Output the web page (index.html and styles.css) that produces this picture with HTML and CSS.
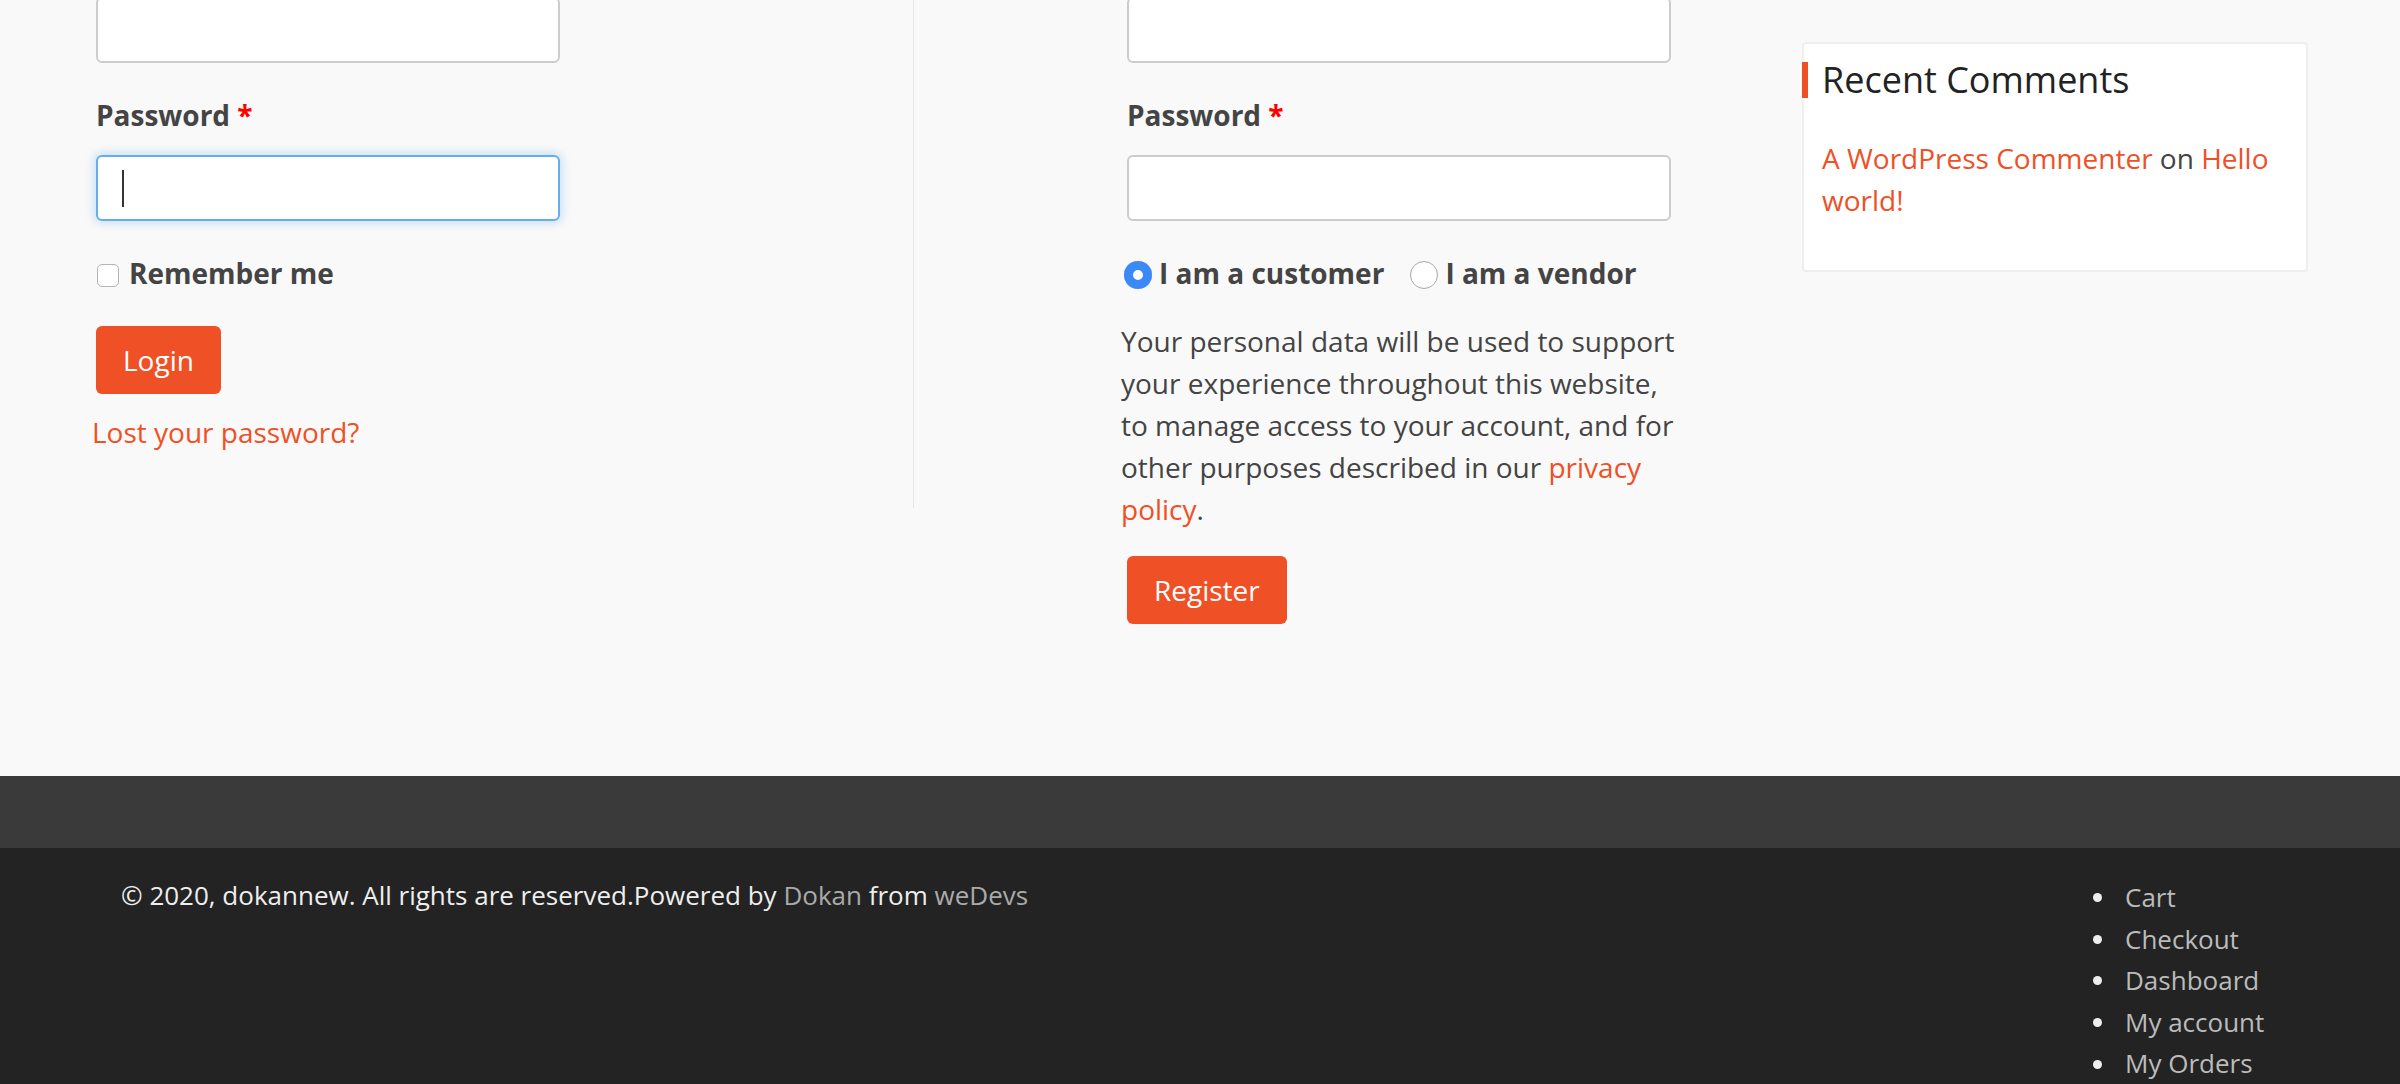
FILE: index.html
```html
<!DOCTYPE html>
<html lang="en">
<head>
<meta charset="utf-8">
<title>My account – dokannew</title>
<link rel="stylesheet" href="styles.css">
</head>
<body>
<div class="site-main">
  <section class="col col-login">
    <form class="form">
      <div class="row row-first"><input class="text-input" type="text" aria-label="Username or email address"></div>
      <div class="row row-label"><label class="field-label">Password <span class="required">*</span></label></div>
      <div class="row row-input"><span class="input-wrap"><input class="text-input is-focused" type="password" aria-label="Password"><span class="caret"></span></span></div>
      <div class="row row-check"><label class="check-label"><input type="checkbox" class="check"><span>Remember me</span></label></div>
      <div class="row row-btn"><button type="button" class="btn">Login</button></div>
      <div class="row row-lost"><a href="#">Lost your password?</a></div>
    </form>
  </section>
  <section class="col col-register">
    <form class="form">
      <div class="row row-first row-indent"><input class="text-input text-input-wide" type="email" aria-label="Email address"></div>
      <div class="row row-label row-indent"><label class="field-label">Password <span class="required">*</span></label></div>
      <div class="row row-input row-indent"><input class="text-input text-input-wide" type="password" aria-label="Password"></div>
      <div class="row row-check row-radios">
        <label class="radio-label"><input type="radio" name="role" class="radio" checked><span>I am a customer</span></label>
        <label class="radio-label radio-label-second"><input type="radio" name="role" class="radio"><span>I am a vendor</span></label>
      </div>
      <p class="privacy">Your personal data will be used to support your experience throughout this website, to manage access to your account, and for other purposes described in our <a href="#">privacy policy</a>.</p>
      <div class="row row-register row-indent"><button type="button" class="btn">Register</button></div>
    </form>
  </section>
  <aside class="sidebar">
    <div class="widget">
      <h2 class="widget-title">Recent Comments</h2>
      <ul class="comments">
        <li><a href="#">A WordPress Commenter</a> on <a href="#">Hello world!</a></li>
      </ul>
    </div>
  </aside>
</div>
<footer class="site-footer">
  <div class="footer-widgets"></div>
  <div class="site-info">
    <p class="copyright">© 2020, dokannew. All rights are reserved.Powered by <a href="#">Dokan</a> from <a href="#">weDevs</a></p>
    <ul class="footer-menu">
      <li><a href="#">Cart</a></li>
      <li><a href="#">Checkout</a></li>
      <li><a href="#">Dashboard</a></li>
      <li><a href="#">My account</a></li>
      <li><a href="#">My Orders</a></li>
    </ul>
  </div>
</footer>
</body>
</html>
```

FILE: styles.css
```css
* { box-sizing: border-box; }
html, body { margin: 0; padding: 0; }
body {
  background: #f9f9f9;
  font-family: "Open Sans", "Liberation Sans", sans-serif;
  font-size: 28px;
  line-height: 42px;
  color: #444;
  overflow: hidden;
}
a { color: #f05025; text-decoration: none; }

.site-main {
  display: flex;
  align-items: flex-start;
  padding: 0 92px 152px 96px;
}
.col-login {
  width: 818px;
  border-right: 1px solid #e6e6e6;
  padding-bottom: 55px;
}
.col-register {
  width: 769px;
  padding-left: 207px;
}
.sidebar {
  margin-left: auto;
  width: 506px;
  margin-top: 42px;
}

.form { margin: 0; }
.row { display: block; }
.row-first { margin-top: -3px; }
.row-label { margin-top: 31px; }
.row-input { margin-top: 19px; }
.row-check { margin-top: 31px; }
.row-btn { margin-top: 32px; }
.row-register { margin-top: 26px; }
.row-lost { margin-top: 17px; margin-left: -4px; }
.row-indent { margin-left: 6px; }

.field-label { font-weight: 700; color: #444; }
.required { color: #f00; font-weight: 700; }

.text-input {
  display: block;
  width: 464px;
  height: 66px;
  background: #fff;
  border: 2px solid #cccccc;
  border-radius: 6px;
  font: inherit;
  outline: none;
  padding: 0 24px;
}
.text-input-wide { width: 544px; }
.text-input.is-focused {
  border-color: #66aeea;
  box-shadow: 0 0 10px 2px rgba(102, 174, 234, 0.35);
}
.input-wrap { position: relative; display: block; width: 464px; }
.caret {
  position: absolute;
  left: 26px;
  top: 15px;
  width: 2px;
  height: 37px;
  background: #333;
}

.check-label {
  display: flex;
  align-items: center;
  font-weight: 700;
  color: #444;
}
.check {
  appearance: none;
  -webkit-appearance: none;
  width: 22px;
  height: 23px;
  margin: 4px 10px 0 1px;
  background: #fff;
  border: 1.5px solid #b5b5b5;
  border-radius: 5px;
}

.row-radios {
  display: flex;
  align-items: center;
  margin-left: 3px;
}
.radio-label {
  display: flex;
  align-items: center;
  font-weight: 700;
  color: #444;
}
.radio-label-second { margin-left: 26px; }
.radio {
  appearance: none;
  -webkit-appearance: none;
  width: 28px;
  height: 28px;
  margin: 4px 7px 0 0;
  border-radius: 50%;
  background: #fff;
  border: 1.5px solid #a8a8a8;
}
.radio:checked {
  border: none;
  background: #3b88f7;
  box-shadow: inset 0 0 0 9px #3b88f7, inset 0 0 0 14px #fff;
}

.privacy {
  margin: 26px 0 0;
  width: 562px;
  color: #444;
}

.btn {
  display: inline-block;
  background: #f05025;
  color: #fff;
  border: none;
  border-radius: 6px;
  font: inherit;
  padding: 13px 27px;
  height: 68px;
  cursor: pointer;
}

.widget {
  background: #fff;
  border: 2px solid #eeeeee;
  border-radius: 4px;
  padding: 18px 20px 49px 18px;
}
.widget-title {
  margin: 0 0 39px -20px;
  border-left: 6px solid #f05025;
  padding-left: 14px;
  font-size: 36px;
  line-height: 36px;
  font-weight: 400;
  color: #222;
}
.comments { list-style: none; margin: 0; padding: 0; color: #444; }

.footer-widgets { background: #3a3a3a; height: 72px; }
.site-info {
  background: #232323;
  display: flex;
  align-items: flex-start;
  padding: 27px 0 0 121px;
  height: 260px;
  color: #eeeeee;
  font-size: 26px;
  line-height: 41.6px;
}
.copyright { flex: 1; margin: 0; }
.copyright a { color: #aaaaaa; }
.footer-menu {
  flex: 0 0 307px;
  list-style: none;
  margin: 2px 0 0;
  padding: 0;
}
.footer-menu li { display: flex; align-items: center; }
.footer-menu li::before {
  content: "";
  width: 9px;
  height: 9px;
  border-radius: 50%;
  background: #eeeeee;
  margin-right: 23px;
}
.footer-menu a { color: #bbbbbb; }
```
